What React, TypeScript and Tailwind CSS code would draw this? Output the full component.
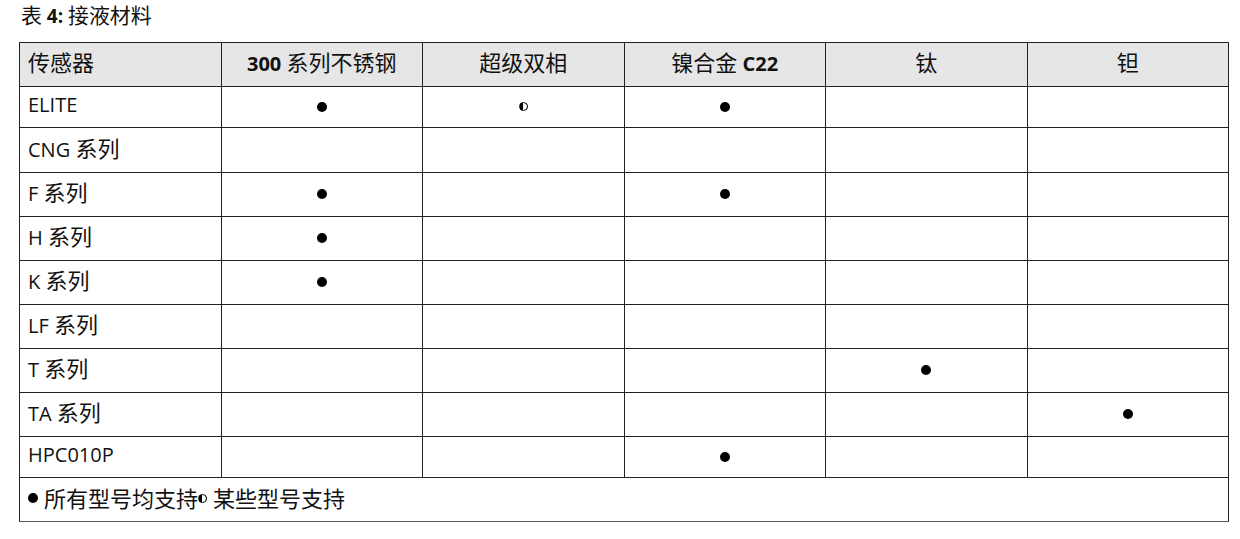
import React from "react";

type Mark = "" | "full" | "half";

const rows: { name: string; marks: Mark[]; h: string }[] = [
  { name: "ELITE", marks: ["full", "half", "full", "", ""], h: "h-[41px]" },
  { name: "CNG 系列", marks: ["", "", "", "", ""], h: "h-[45px]" },
  { name: "F 系列", marks: ["full", "", "full", "", ""], h: "h-[44px]" },
  { name: "H 系列", marks: ["full", "", "", "", ""], h: "h-[44px]" },
  { name: "K 系列", marks: ["full", "", "", "", ""], h: "h-[44px]" },
  { name: "LF 系列", marks: ["", "", "", "", ""], h: "h-[44px]" },
  { name: "T 系列", marks: ["", "", "", "full", ""], h: "h-[44px]" },
  { name: "TA 系列", marks: ["", "", "", "", "full"], h: "h-[44px]" },
  { name: "HPC010P", marks: ["", "", "full", "", ""], h: "h-[41px]" },
];

// 中文字符比拉丁字母略大
function T({ children }: { children: string }) {
  const parts = children.split(/([\u4e00-\u9fff]+)/);
  return (
    <>
      {parts.map((p, i) =>
        /[\u4e00-\u9fff]/.test(p) ? (
          <span key={i} className="text-[1.1em]">
            {p}
          </span>
        ) : (
          <React.Fragment key={i}>{p}</React.Fragment>
        )
      )}
    </>
  );
}

function Dot({ kind }: { kind: Mark }) {
  if (kind === "full") {
    return <span className="inline-block w-[10px] h-[10px] rounded-full bg-black align-middle" />;
  }
  if (kind === "half") {
    return (
      <span className="inline-block w-[9px] h-[9px] rounded-full border border-black bg-[linear-gradient(90deg,#000_50%,#fff_50%)] align-middle" />
    );
  }
  return null;
}

export default function App() {
  return (
    <div className="bg-white w-[1240px] h-[539px] text-[#111] font-['Open_Sans','Noto_Sans_CJK_SC',sans-serif]">
      {/* 标题 */}
      <div className="pl-[21px] pt-[2px] h-[42px] text-[19px] leading-[26px]">
        <T>表 </T>
        <span className="font-bold">4:</span> <T>接液材料</T>
      </div>

      <table className="ml-[19px] w-[1210px] table-fixed border-collapse text-[20px]">
        <thead>
          <tr className="h-[44px] bg-[#e6e6e6]">
            <th className="border border-[#222] px-[8px] pb-[4px] text-left font-normal">
              <T>传感器</T>
            </th>
            <th className="border border-[#222] pb-[4px] font-normal">
              <span className="font-bold">300</span> <T>系列不锈钢</T>
            </th>
            <th className="border border-[#222] pb-[4px] font-normal">
              <T>超级双相</T>
            </th>
            <th className="border border-[#222] pb-[4px] font-normal">
              <T>镍合金</T> <span className="font-bold">C22</span>
            </th>
            <th className="border border-[#222] pb-[4px] font-normal">
              <T>钛</T>
            </th>
            <th className="border border-[#222] pb-[4px] font-normal">
              <T>钽</T>
            </th>
          </tr>
        </thead>
        <tbody>
          {rows.map((r) => (
            <tr key={r.name} className={r.h}>
              <td className="border border-[#222] px-[8px] pb-[4px]">
                <T>{r.name}</T>
              </td>
              {r.marks.map((m, i) => (
                <td key={i} className="border border-[#222] pb-[4px] text-center leading-none">
                  <Dot kind={m} />
                </td>
              ))}
            </tr>
          ))}
          <tr className="h-[44px]">
            <td colSpan={6} className="border border-[#222] border-b-[#555] px-[8px] pb-[3px]">
              <span className="inline-flex items-center gap-[6px]">
                <Dot kind="full" />
                <T>所有型号均支持</T>
              </span>
              <span className="inline-flex items-center gap-[6px]">
                <Dot kind="half" />
                <T>某些型号支持</T>
              </span>
            </td>
          </tr>
        </tbody>
      </table>
    </div>
  );
}
